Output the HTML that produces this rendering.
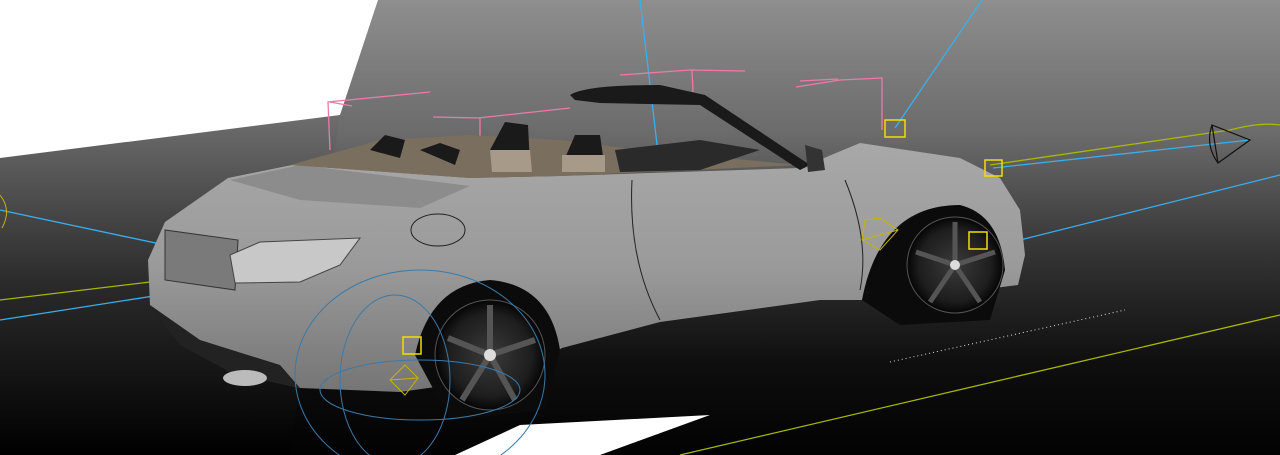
<!DOCTYPE html>
<html><head><meta charset="utf-8"><style>html,body{margin:0;padding:0;width:1280px;height:455px;overflow:hidden;background:#000;position:relative}svg{position:absolute;left:0;top:0}</style></head><body><svg width="1280" height="455" viewBox="0 0 1280 455" xmlns="http://www.w3.org/2000/svg">
<defs>
<linearGradient id="bg" x1="0" y1="0" x2="0" y2="1">
<stop offset="0" stop-color="#8e8e8e"/><stop offset="0.3" stop-color="#6a6a6a"/><stop offset="0.55" stop-color="#353535"/><stop offset="0.8" stop-color="#0e0e0e"/><stop offset="1" stop-color="#020202"/></linearGradient>
<linearGradient id="gl" x1="0" y1="0" x2="0" y2="1">
<stop offset="0" stop-color="#6e6e6e"/><stop offset="0.5" stop-color="#2a2a2a"/><stop offset="1" stop-color="#000"/></linearGradient>
<linearGradient id="body" x1="0" y1="0" x2="0" y2="1">
<stop offset="0" stop-color="#a8a8a8"/><stop offset="0.5" stop-color="#9a9a9a"/><stop offset="1" stop-color="#757575"/></linearGradient>
<radialGradient id="wh"><stop offset="0" stop-color="#3a3a3a"/><stop offset="0.75" stop-color="#1e1e1e"/><stop offset="1" stop-color="#050505"/></radialGradient>
</defs>
<rect width="1280" height="455" fill="url(#bg)"/>
<polygon points="0,158 340,115 290,455 0,455" fill="url(#gl)"/>
<polygon points="0,0 378,0 340,115 0,158" fill="#fff"/>
<polygon points="455,455 520,425 710,415 600,455" fill="#fff"/>
<line x1="890" y1="362" x2="1125" y2="310" stroke="#ddd" stroke-width="1" stroke-dasharray="1,3"/>
<g fill="none" stroke-width="1.3">
<line x1="0" y1="320" x2="160" y2="295" stroke="#38b0f0"/>
<line x1="0" y1="300" x2="150" y2="282" stroke="#a6b800"/>
<line x1="0" y1="210" x2="165" y2="245" stroke="#38b0f0"/>
<line x1="680" y1="455" x2="1280" y2="315" stroke="#a6b800"/>
<line x1="1280" y1="175" x2="920" y2="265" stroke="#38b0f0"/>
<line x1="410" y1="345" x2="890" y2="232" stroke="#38b0f0"/>
<line x1="993" y1="168" x2="1250" y2="140" stroke="#38b0f0"/>
<path d="M990 165 L1230 130 Q1260 122 1280 125" stroke="#a6b800"/>
<line x1="895" y1="128" x2="982" y2="0" stroke="#38b0f0"/>
<line x1="640" y1="0" x2="660" y2="170" stroke="#38b0f0"/>
<path d="M330 150 L328 102 L430 92 M330 102 L352 106 M433 117 L480 118 L480 175 M478 118 L570 108" stroke="#ee79a6"/>
<path d="M620 75 L690 70 L745 71 M692 70 L693 92 M796 87 L840 80 L882 78 L882 130 M800 81 L838 79" stroke="#ee79a6"/>
</g>
<path d="M165 222 L228 178 L292 165 L470 178 L560 176 L800 168 L860 143 L960 158 L1000 178 L1020 210 L1025 255 L1018 285 L900 300 L820 300 L660 322 L562 348 L520 375 L400 392 L300 388 L230 372 L180 340 L150 305 L148 260 Z" fill="url(#body)"/>
<path d="M230 180 L300 200 L420 208 L470 186 L300 165 Z" fill="#8c8c8c"/>
<path d="M165 230 L165 280 L235 290 L238 240 Z" fill="#7a7a7a" stroke="#333"/>
<path d="M230 255 L260 242 L360 238 L340 265 L300 282 L235 283 Z" fill="#c8c8c8" stroke="#444"/>
<ellipse cx="438" cy="230" rx="27" ry="16" fill="none" stroke="#222"/>
<path d="M632 180 Q628 260 660 320" fill="none" stroke="#222"/>
<path d="M845 180 Q870 240 860 290" fill="none" stroke="#222"/>
<path d="M150 305 L180 345 L230 372 L300 388 L280 365 L200 340 Z" fill="#222"/>
<path d="M290 165 L380 140 L470 135 L560 140 L640 150 L800 165 L560 176 L470 178 Z" fill="#7a6e5e"/>
<path d="M370 150 L385 135 L405 140 L400 158 Z M420 150 L440 143 L460 150 L455 165 Z M490 150 L505 122 L528 125 L530 165 L495 168 Z M562 165 L575 135 L600 135 L605 170 Z" fill="#1a1a1a"/>
<path d="M490 150 L530 150 L532 172 L492 172 Z M562 155 L605 155 L605 172 L562 172 Z" fill="#a89a88"/>
<path d="M615 150 L700 140 L760 150 L700 170 L620 172 Z" fill="#2a2a2a"/>
<path d="M570 95 Q585 85 660 85 L705 95 L810 165 L800 170 L700 105 L600 103 L575 100 Z" fill="#1a1a1a"/>
<path d="M805 145 L822 150 L825 170 L808 172 Z" fill="#333"/>
<path d="M862 300 Q880 205 960 205 Q1000 215 1005 270 L990 320 L900 325 Z" fill="#0b0b0b"/>
<circle cx="955" cy="265" r="48" fill="url(#wh)" stroke="#555"/>
<g stroke="#555" stroke-width="5"><line x1="955" y1="265" x2="955" y2="222"/><line x1="955" y1="265" x2="995" y2="252"/><line x1="955" y1="265" x2="980" y2="302"/><line x1="955" y1="265" x2="930" y2="302"/><line x1="955" y1="265" x2="916" y2="252"/></g>
<circle cx="955" cy="265" r="5" fill="#ddd"/>
<path d="M415 355 Q430 285 490 280 Q550 285 560 350 L545 410 L450 420 Z" fill="#0b0b0b"/>
<circle cx="490" cy="355" r="55" fill="url(#wh)" stroke="#555"/>
<g stroke="#555" stroke-width="6"><line x1="490" y1="355" x2="490" y2="305"/><line x1="490" y1="355" x2="535" y2="340"/><line x1="490" y1="355" x2="515" y2="400"/><line x1="490" y1="355" x2="462" y2="400"/><line x1="490" y1="355" x2="448" y2="338"/></g>
<circle cx="490" cy="355" r="6" fill="#ddd"/>
<ellipse cx="245" cy="378" rx="22" ry="8" fill="#bbb"/>
<g fill="none" stroke="#3a7aa8" stroke-width="1">
<ellipse cx="420" cy="375" rx="125" ry="105"/>
<ellipse cx="395" cy="380" rx="55" ry="85"/>
<ellipse cx="420" cy="390" rx="100" ry="30"/>
</g>
<g fill="none" stroke="#f0e000" stroke-width="1.5">
<rect x="403" y="337" width="18" height="17"/>
<rect x="885" y="120" width="20" height="17"/>
<rect x="985" y="160" width="17" height="16"/>
<rect x="969" y="232" width="18" height="17"/>
</g>
<g fill="none" stroke="#c8b400" stroke-width="1">
<path d="M390 380 L405 365 L418 378 L405 395 Z M390 380 L418 378"/>
<path d="M865 220 L880 218 L898 230 L880 250 L862 240 Z M862 240 L898 230"/>
<path d="M0 195 Q12 210 2 228"/>
</g>
<path d="M1212 125 L1250 140 L1218 163 Q1205 145 1212 125 Z M1218 163 L1212 125" fill="none" stroke="#111" stroke-width="1.2"/>
</svg></body></html>
